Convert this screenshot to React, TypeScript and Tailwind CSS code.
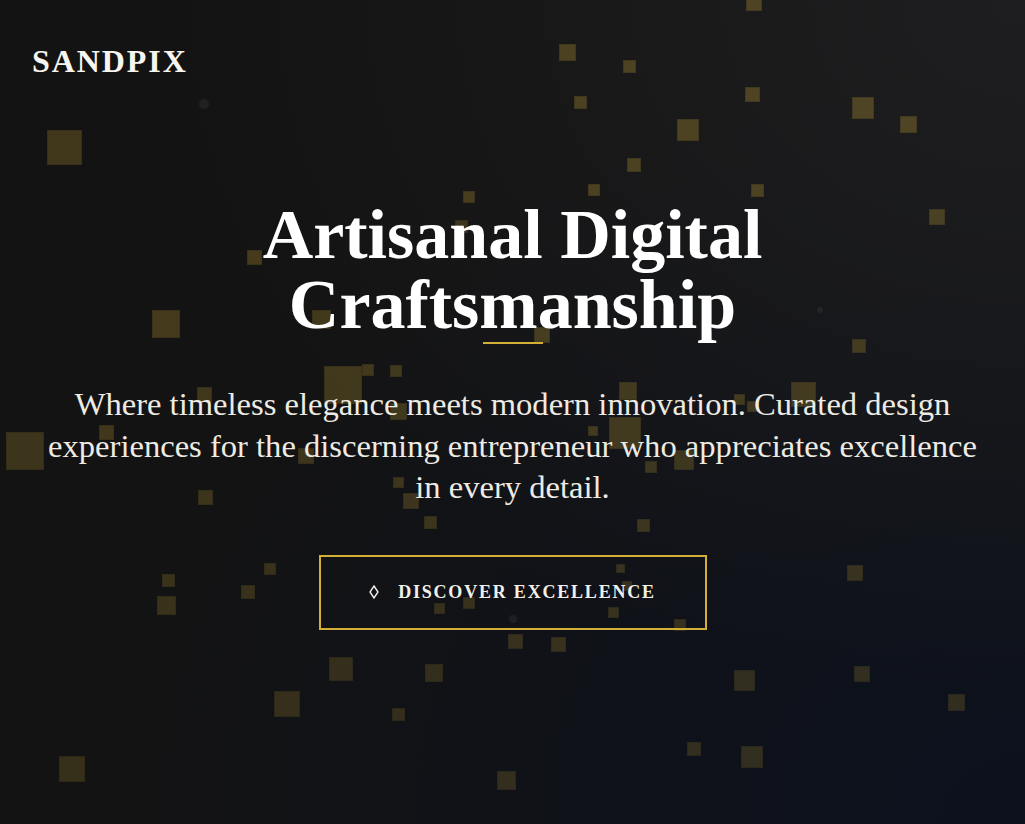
import React from 'react';

// [left, top, size, alpha]
const particles: [number, number, number, number][] = [
  [746, -5, 16, 0.28], [559, 44, 17, 0.28], [623, 60, 13, 0.28], [574, 96, 13, 0.28],
  [677, 119, 22, 0.28], [745, 87, 15, 0.28], [852, 97, 22, 0.28], [900, 116, 17, 0.28],
  [47, 130, 35, 0.24], [627, 158, 14, 0.28], [588, 184, 12, 0.28], [751, 184, 13, 0.28],
  [463, 191, 12, 0.26], [929, 209, 16, 0.26], [247, 250, 15, 0.26], [455, 220, 13, 0.2],
  [152, 310, 28, 0.26], [312, 310, 19, 0.24], [534, 327, 16, 0.26], [852, 339, 14, 0.24],
  [324, 366, 38, 0.24], [362, 364, 12, 0.24], [390, 365, 12, 0.24], [197, 387, 15, 0.24],
  [390, 403, 17, 0.24], [99, 425, 15, 0.24], [6, 432, 38, 0.22], [298, 448, 16, 0.22],
  [393, 477, 11, 0.22], [403, 493, 16, 0.22], [424, 516, 13, 0.22], [198, 490, 15, 0.22],
  [619, 382, 18, 0.24], [609, 417, 32, 0.24], [588, 426, 10, 0.24], [734, 394, 11, 0.24],
  [747, 401, 11, 0.24], [791, 382, 25, 0.24], [645, 461, 12, 0.22], [674, 450, 20, 0.22],
  [637, 519, 13, 0.22], [847, 565, 16, 0.2], [616, 564, 9, 0.2], [622, 581, 10, 0.2],
  [608, 607, 11, 0.2], [674, 619, 12, 0.2], [434, 603, 11, 0.2], [463, 597, 12, 0.2],
  [508, 634, 15, 0.2], [551, 637, 15, 0.2], [162, 574, 13, 0.2], [157, 596, 19, 0.2],
  [241, 585, 14, 0.2], [264, 563, 12, 0.2], [329, 657, 24, 0.18], [425, 664, 18, 0.18],
  [274, 691, 26, 0.18], [392, 708, 13, 0.18], [59, 756, 26, 0.18], [497, 771, 19, 0.18],
  [734, 670, 21, 0.18], [854, 666, 16, 0.18], [948, 694, 17, 0.18], [687, 742, 14, 0.18],
  [741, 746, 22, 0.18],
];

// faint round dots
const dots: [number, number, number][] = [
  [199, 99, 10],
  [817, 307, 6],
  [509, 615, 8],
];

export default function App() {
  return (
    <div className="relative h-screen min-h-[824px] w-full overflow-hidden bg-[#131313] font-['Liberation_Serif',serif]">
      {/* Background tint */}
      <div className="pointer-events-none absolute inset-0 bg-[radial-gradient(ellipse_at_100%_0%,#1e1e20_0%,rgba(30,30,32,0)_60%),radial-gradient(ellipse_at_100%_100%,#0c111e_0%,rgba(12,17,30,0)_65%)]" />

      {/* Gold particles */}
      <div className="pointer-events-none absolute inset-0">
        {particles.map(([x, y, s, a], i) => (
          <span
            key={i}
            className="absolute border border-[#a88a2c] bg-[#d4af37]"
            style={{ left: x, top: y, width: s, height: s, opacity: a }}
          />
        ))}
        {dots.map(([x, y, s], i) => (
          <span
            key={`d${i}`}
            className="absolute rounded-full bg-white/[0.06]"
            style={{ left: x, top: y, width: s, height: s }}
          />
        ))}
      </div>

      {/* Brand */}
      <header className="relative z-10 px-8 pt-[45px]">
        <span className="text-[32px] leading-none font-bold tracking-[0.06em] text-[#f7f5f0]">SANDPIX</span>
      </header>

      {/* Hero */}
      <main className="relative z-10 mt-[121px] flex flex-col items-center px-6 text-center">
        <h1 className="max-w-[640px] text-[70px] leading-[70px] font-bold text-white">
          Artisanal Digital Craftsmanship
        </h1>
        <div className="mt-[2px] h-[2px] w-[60px] bg-[#d4af37]" />
        <p className="mt-[40px] max-w-[950px] text-[32.6px] leading-[41.5px] text-[#eeebe4]">
          Where timeless elegance meets modern innovation. Curated design experiences for the discerning
          entrepreneur who appreciates excellence in every detail.
        </p>
        <button className="mt-[46px] inline-flex h-[75px] w-[388px] items-center justify-center gap-[19px] border-2 border-[#d4af37] bg-transparent text-[#f2efe8]">
          <svg width="10" height="14" viewBox="0 0 10 14" className="shrink-0">
            <path d="M5 1 L9 7 L5 13 L1 7 Z" fill="none" stroke="currentColor" strokeWidth="1.4" strokeLinejoin="miter" />
          </svg>
          <span className="text-[18px] font-bold tracking-[0.1em]">DISCOVER EXCELLENCE</span>
        </button>
      </main>
    </div>
  );
}
